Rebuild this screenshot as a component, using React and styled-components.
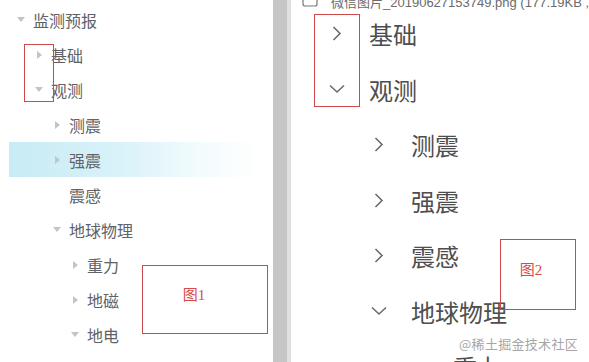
import React from 'react';
import styled, { createGlobalStyle } from 'styled-components';

const GlobalStyle = createGlobalStyle`
  html, body {
    margin: 0;
    padding: 0;
    background: #ffffff;
  }
  body {
    font-family: "Noto Sans CJK SC", "Noto Sans", sans-serif;
  }
`;

const Page = styled.div`
  position: relative;
  width: 589px;
  height: 362px;
  overflow: hidden;
  display: flex;
  background: #fff;
`;

const LeftPanel = styled.div`
  width: 273px;
  flex-shrink: 0;
  padding: 2px 0 0 9px;
  box-sizing: border-box;
`;

const Divider = styled.div`
  width: 14px;
  flex-shrink: 0;
  background: #c6c6c6;
  border-right: 4px solid #e0e0e0;
`;

const RightPanel = styled.div`
  flex: 1;
  display: flex;
  flex-direction: column;
  overflow: hidden;
`;

const TreeRow = styled.div`
  height: 35px;
  display: flex;
  align-items: center;
  padding-left: ${(p) => p.$level * 18}px;
  width: 250px;
  box-sizing: border-box;
  font-size: 16px;
  color: #606266;
  background: ${(p) =>
    p.$active
      ? 'linear-gradient(to right, #c8ebf5 0%, #d9f2f9 45%, #f2fbfd 75%, #ffffff 100%)'
      : 'transparent'};
`;

const Caret = styled.span`
  width: 24px;
  display: flex;
  justify-content: center;
  align-items: center;
  &::before {
    content: '';
    display: ${(p) => (p.$dir ? 'block' : 'none')};
    width: 0;
    height: 0;
    border-style: solid;
    border-color: transparent;
    ${(p) =>
      p.$dir === 'down'
        ? 'border-width: 5px 4px 0 4px; border-top-color: #c0c4cc;'
        : 'border-width: 4px 0 4px 5px; border-left-color: #c0c4cc;'}
  }
`;

const FileBar = styled.div`
  height: 6px;
  flex-shrink: 0;
  display: flex;
  align-items: flex-end;
  padding-left: 11px;
  font-size: 13px;
  color: #6a6a6a;
  white-space: nowrap;
  font-family: "Liberation Sans", "Noto Sans CJK SC", sans-serif;
`;

const FileLine = styled.div`
  display: flex;
  align-items: center;
  gap: 13px;
  line-height: 16px;
  margin-bottom: -5px;
`;

const BigRow = styled.div`
  height: 55.5px;
  flex-shrink: 0;
  display: flex;
  align-items: center;
  padding-left: ${(p) => 32 + p.$level * 42}px;
  font-size: 24px;
  color: #4e4e4e;
`;

const ChevronBox = styled.span`
  width: 28px;
  margin-right: 18px;
  display: flex;
  justify-content: center;
  align-items: center;
`;

const RedBox = styled.div`
  position: absolute;
  left: ${(p) => p.$x}px;
  top: ${(p) => p.$y}px;
  width: ${(p) => p.$w}px;
  height: ${(p) => p.$h}px;
  border: 1px solid #cc4a4a;
  box-sizing: border-box;
  display: flex;
  align-items: center;
  justify-content: center;
`;

const BoxLabel = styled.span`
  font-family: "Liberation Serif", "Noto Sans CJK SC", serif;
  font-size: 15px;
  color: #d94a4a;
  margin: ${(p) => p.$offset};
`;

const Watermark = styled.div`
  position: absolute;
  right: 11px;
  top: 334px;
  font-size: 13px;
  color: #a6a6a6;
  letter-spacing: 0.3px;
  text-shadow: 0 0 2px #fff, 0 0 2px #fff, 0 0 3px #fff;
`;

const Chevron = ({ dir }) =>
  dir === 'down' ? (
    <svg width="16" height="10" viewBox="0 0 16 10">
      <polyline points="1,1.5 8,8 15,1.5" fill="none" stroke="#6b6b6b" strokeWidth="1.6" />
    </svg>
  ) : (
    <svg width="10" height="15" viewBox="0 0 10 15">
      <polyline points="1.5,1 8,7.5 1.5,14" fill="none" stroke="#6b6b6b" strokeWidth="1.6" />
    </svg>
  );

const FileIcon = () => (
  <svg width="16" height="8" viewBox="0 0 16 8">
    <path d="M1 0 V5 Q1 7 3 7 H13 Q15 7 15 5 V0" fill="none" stroke="#777" strokeWidth="1.2" />
  </svg>
);

const leftTree = [
  { label: '监测预报', level: 0, dir: 'down' },
  { label: '基础', level: 1, dir: 'right' },
  { label: '观测', level: 1, dir: 'down' },
  { label: '测震', level: 2, dir: 'right' },
  { label: '强震', level: 2, dir: 'right', active: true },
  { label: '震感', level: 2, dir: null },
  { label: '地球物理', level: 2, dir: 'down' },
  { label: '重力', level: 3, dir: 'right' },
  { label: '地磁', level: 3, dir: 'right' },
  { label: '地电', level: 3, dir: 'down' },
];

const rightTree = [
  { label: '基础', level: 0, dir: 'right' },
  { label: '观测', level: 0, dir: 'down' },
  { label: '测震', level: 1, dir: 'right' },
  { label: '强震', level: 1, dir: 'right' },
  { label: '震感', level: 1, dir: 'right' },
  { label: '地球物理', level: 1, dir: 'down' },
  { label: '重力', level: 2, dir: 'down' },
];

const App = () => {
  return (
    <>
      <GlobalStyle />
      <Page>
        <LeftPanel>
          {leftTree.map((item) => (
            <TreeRow key={item.label} $level={item.level} $active={item.active}>
              <Caret $dir={item.dir} />
              {item.label}
            </TreeRow>
          ))}
        </LeftPanel>
        <Divider />
        <RightPanel>
          <FileBar>
            <FileLine>
              <FileIcon />
              <span>微信图片_20190627153749.png (177.19KB , 1920x1080)</span>
            </FileLine>
          </FileBar>
          {rightTree.map((item) => (
            <BigRow key={item.label} $level={item.level}>
              <ChevronBox>
                <Chevron dir={item.dir} />
              </ChevronBox>
              {item.label}
            </BigRow>
          ))}
        </RightPanel>

        <RedBox $x={24} $y={44} $w={30} $h={58} />
        <RedBox $x={142} $y={265} $w={126} $h={69}>
          <BoxLabel $offset="0 22px 12px 0">图1</BoxLabel>
        </RedBox>
        <RedBox $x={314} $y={14} $w={46} $h={93} />
        <RedBox $x={500} $y={239} $w={76} $h={71}>
          <BoxLabel $offset="0 14px 12px 0">图2</BoxLabel>
        </RedBox>
        <Watermark>@稀土掘金技术社区</Watermark>
      </Page>
    </>
  );
};

export default App;
